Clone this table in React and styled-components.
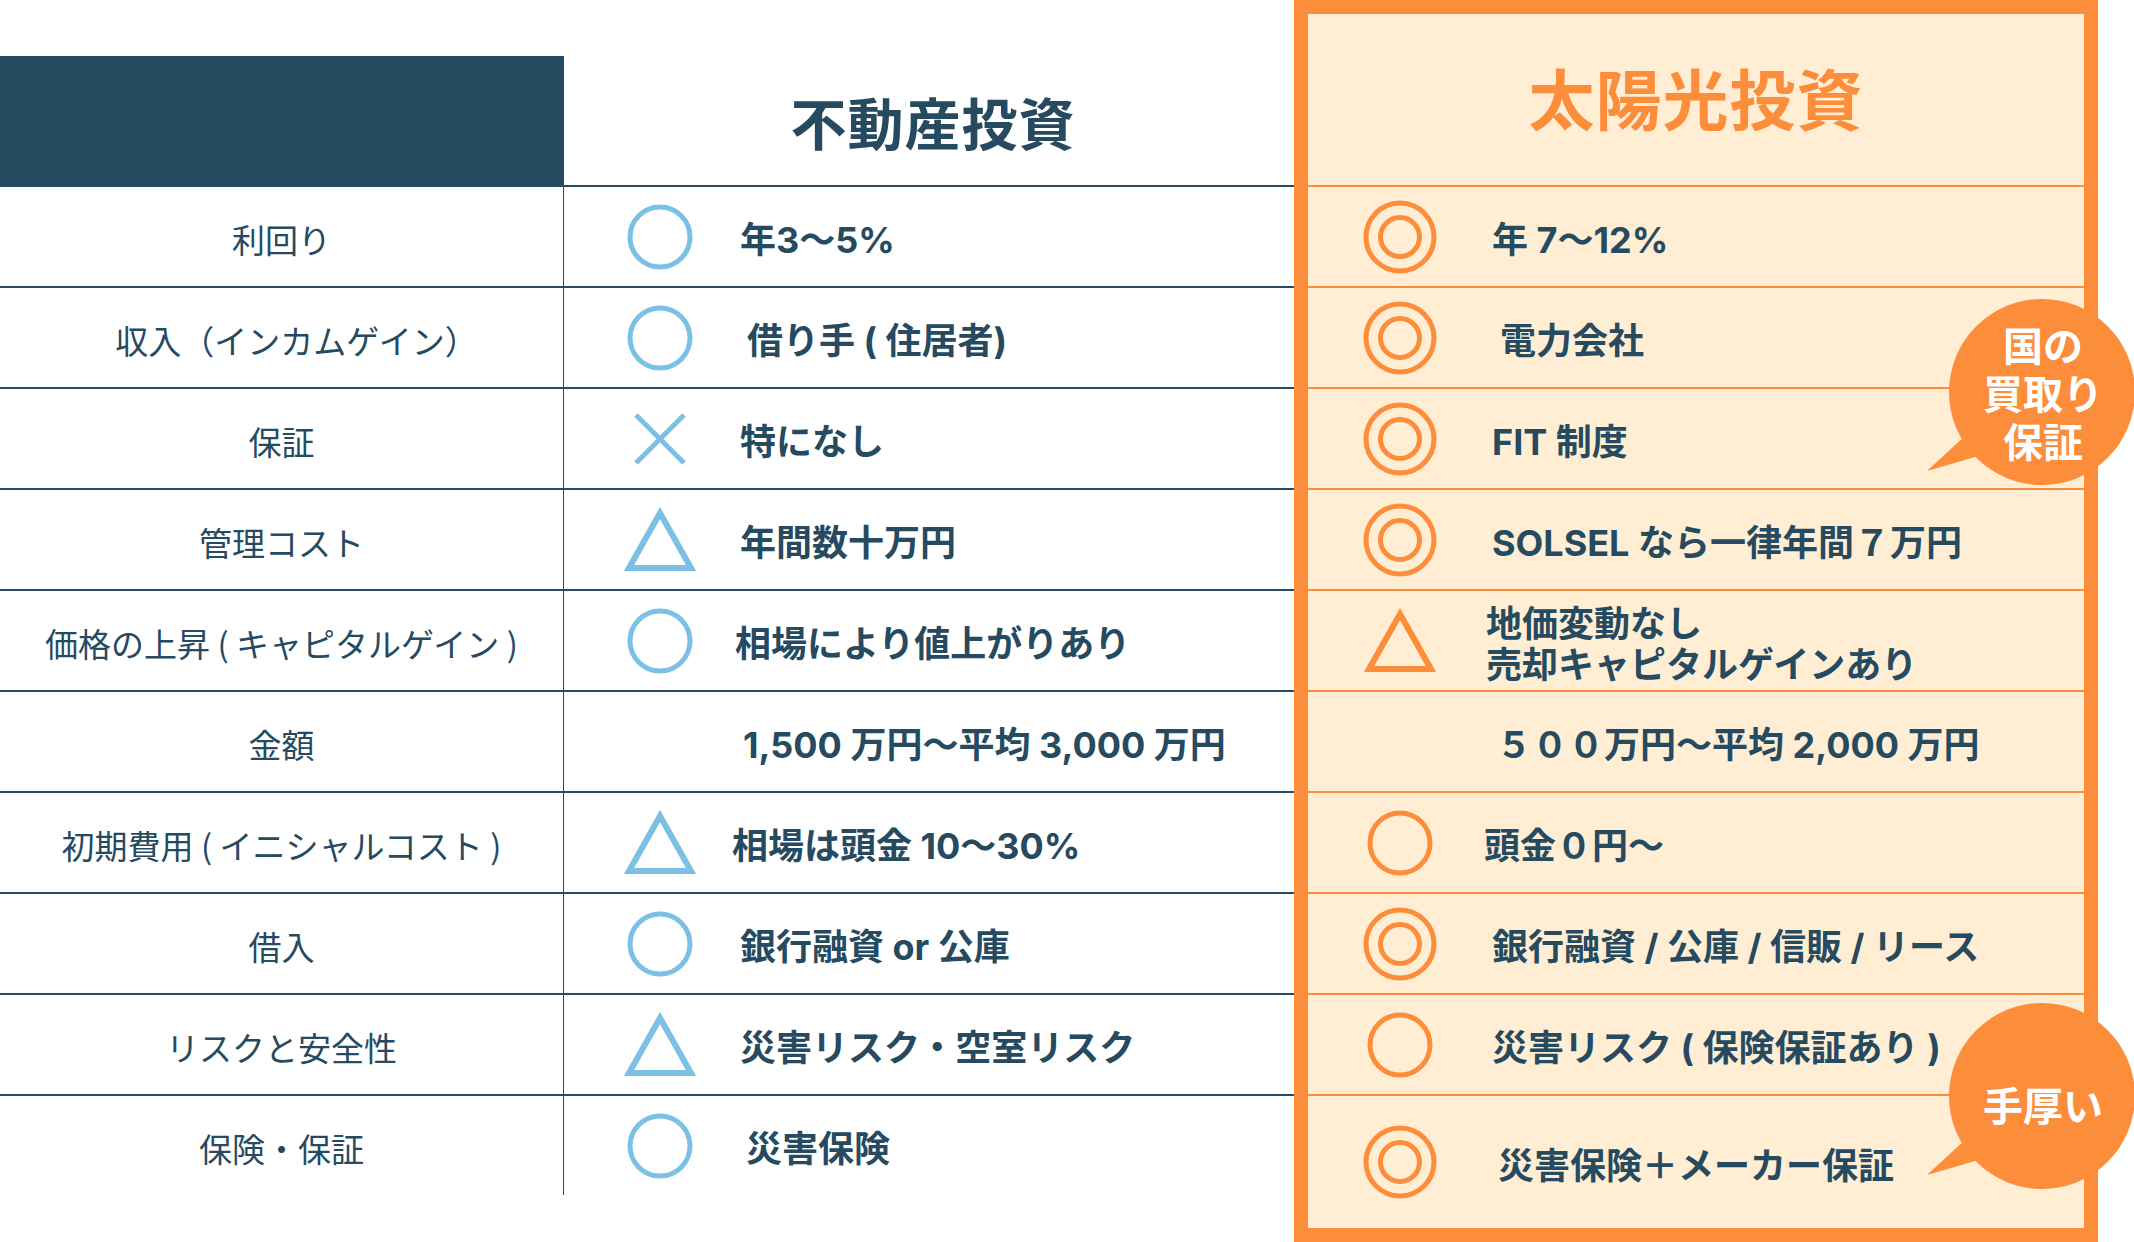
import styled, { createGlobalStyle } from "styled-components";

const navy = "#264A5F";
const blue = "#7CC0E6";
const orange = "#FB8D3B";
const cream = "#FFEED3";

const GlobalStyle = createGlobalStyle`
  body {
    margin: 0;
    background: #fff;
    font-family: "Noto Sans CJK JP", "Noto Sans", sans-serif;
    color: ${navy};
  }
`;

const Page = styled.div`
  position: relative;
  display: flex;
  align-items: flex-start;
  width: 2134px;
  height: 1242px;
  overflow: hidden;
  background: #fff;
`;

const Table = styled.div`
  width: 1294px;
  margin-top: 56px;
`;

const HeadRow = styled.div`
  display: grid;
  grid-template-columns: 564px 1fr;
  height: 129px;
`;

const HeadBlock = styled.div`
  background: ${navy};
`;

const HeadTitle = styled.h2`
  margin: 0;
  display: flex;
  align-items: center;
  justify-content: center;
  padding-left: 8px;
  font-size: 56px;
  font-weight: 700;
  letter-spacing: 1px;
  color: ${navy};
`;

const Row = styled.div`
  display: grid;
  grid-template-columns: 564px 1fr;
  height: 101px;
  box-sizing: border-box;
  border-top: 2px solid ${navy};
`;

const Label = styled.div`
  display: flex;
  align-items: center;
  justify-content: center;
  padding-top: 5px;
  padding-left: ${(p) => p.$shift || 0}px;
  border-right: 1px solid ${navy};
  font-size: 33px;
  font-weight: 400;
  color: ${navy};
`;

const Value = styled.div`
  display: flex;
  align-items: center;
  padding-left: ${(p) => p.$pad}px;
`;

const IconSlot = styled.div`
  width: 80px;
  height: 80px;
  flex: none;
  display: flex;
  align-items: center;
  justify-content: center;
`;

const Text = styled.div`
  margin-left: ${(p) => p.$gap + (p.$shift || 0)}px;
  padding-top: 8px;
  font-family: "Inter", "Noto Sans CJK JP", sans-serif;
  font-size: 36px;
  font-weight: 700;
  line-height: 1.12;
  color: ${navy};
  white-space: pre-line;
`;

const Panel = styled.div`
  width: 804px;
  height: 1242px;
  box-sizing: border-box;
  border: 14px solid ${orange};
  background: ${cream};
  display: flex;
  flex-direction: column;
`;

const PanelTitle = styled.h2`
  margin: 0;
  height: 171px;
  flex: none;
  box-sizing: border-box;
  padding-bottom: 8px;
  display: flex;
  align-items: center;
  justify-content: center;
  font-size: 66px;
  font-weight: 700;
  letter-spacing: 1px;
  color: ${orange};
`;

const PanelRow = styled.div`
  flex: ${(p) => (p.$last ? "1" : "none")};
  height: ${(p) => (p.$last ? "auto" : "101px")};
  box-sizing: border-box;
  border-top: 2px solid ${orange};
  display: flex;
  align-items: center;
  padding-left: 52px;
`;

const Bubble = styled.div`
  position: absolute;
  left: 1920px;
  top: ${(p) => p.$top}px;
  width: 214px;
  height: 186px;
`;

const BubbleShape = styled.svg`
  position: absolute;
  left: 0;
  top: 0;
`;

const BubbleText = styled.div`
  position: absolute;
  left: 30px;
  top: ${(p) => p.$dy || 0}px;
  width: 186px;
  height: 186px;
  display: flex;
  align-items: center;
  justify-content: center;
  color: #fff;
  font-size: 40px;
  font-weight: 700;
  line-height: 48px;
  text-align: center;
`;

const Circle = ({ color }) => (
  <svg width="68" height="68" viewBox="0 0 68 68">
    <circle cx="34" cy="34" r="30" fill="none" stroke={color} strokeWidth="5" />
  </svg>
);

const DoubleCircle = ({ color }) => (
  <svg width="76" height="76" viewBox="0 0 76 76">
    <circle cx="38" cy="38" r="34" fill="none" stroke={color} strokeWidth="5" />
    <circle cx="38" cy="38" r="19.5" fill="none" stroke={color} strokeWidth="5" />
  </svg>
);

const Triangle = ({ color }) => (
  <svg width="72" height="66" viewBox="0 0 72 66">
    <polygon points="36,6 67,61 5,61" fill="none" stroke={color} strokeWidth="6" />
  </svg>
);

const Cross = ({ color }) => (
  <svg width="56" height="56" viewBox="0 0 56 56">
    <path d="M4 4 L52 52 M52 4 L4 52" stroke={color} strokeWidth="5" />
  </svg>
);

const icons = { o: Circle, oo: DoubleCircle, tri: Triangle, x: Cross };

const Mark = ({ type, color }) => {
  const Icon = icons[type];
  return <IconSlot>{Icon ? <Icon color={color} /> : null}</IconSlot>;
};

const rows = [
  { label: "利回り", a: ["o", "年3〜5%", 0], b: ["oo", "年 7〜12%", 0] },
  { label: "収入（インカムゲイン）", shift: 30, a: ["o", "借り手 ( 住居者)", 7], b: ["oo", "電力会社", 8] },
  { label: "保証", a: ["x", "特になし", 0], b: ["oo", "FIT 制度", 0] },
  { label: "管理コスト", a: ["tri", "年間数十万円", 0], b: ["oo", "SOLSEL なら一律年間７万円", 0] },
  {
    label: "価格の上昇 ( キャピタルゲイン )",
    a: ["o", "相場により値上がりあり", -5],
    b: ["tri", "地価変動なし\n売却キャピタルゲインあり", -6],
  },
  { label: "金額", a: [null, "1,500 万円〜平均 3,000 万円", 3], b: [null, "５００万円〜平均 2,000 万円", 4] },
  { label: "初期費用 ( イニシャルコスト )", a: ["tri", "相場は頭金 10〜30%", -8], b: ["o", "頭金０円〜", -8] },
  { label: "借入", a: ["o", "銀行融資 or 公庫", 0], b: ["oo", "銀行融資 / 公庫 / 信販 / リース", 0] },
  { label: "リスクと安全性", a: ["tri", "災害リスク・空室リスク", 0], b: ["o", "災害リスク ( 保険保証あり )", 0] },
  { label: "保険・保証", a: ["o", "災害保険", 6], b: ["oo", "災害保険＋メーカー保証", 6] },
];

const SpeechBubble = ({ top, dy, children }) => (
  <Bubble $top={top}>
    <BubbleShape width="214" height="186" viewBox="0 0 214 186">
      <circle cx="122" cy="93" r="93" fill={orange} />
      <path d="M46 136 L7 172 L62 156 Z" fill={orange} />
    </BubbleShape>
    <BubbleText $dy={dy}>{children}</BubbleText>
  </Bubble>
);

export default function App() {
  return (
    <Page>
      <GlobalStyle />
      <Table>
        <HeadRow>
          <HeadBlock />
          <HeadTitle>不動産投資</HeadTitle>
        </HeadRow>
        {rows.map((r) => (
          <Row key={r.label}>
            <Label $shift={r.shift}>{r.label}</Label>
            <Value $pad={56}>
              <Mark type={r.a[0]} color={blue} />
              <Text $gap={40} $shift={r.a[2]}>
                {r.a[1]}
              </Text>
            </Value>
          </Row>
        ))}
      </Table>
      <Panel>
        <PanelTitle>太陽光投資</PanelTitle>
        {rows.map((r, i) => (
          <PanelRow key={r.label} $last={i === rows.length - 1}>
            <Mark type={r.b[0]} color={orange} />
            <Text $gap={52} $shift={r.b[2]}>
              {r.b[1]}
            </Text>
          </PanelRow>
        ))}
      </Panel>
      <SpeechBubble top={299}>
        <span>
          国の
          <br />
          買取り
          <br />
          保証
        </span>
      </SpeechBubble>
      <SpeechBubble top={1003} dy={8}>
        <span>手厚い</span>
      </SpeechBubble>
    </Page>
  );
}
